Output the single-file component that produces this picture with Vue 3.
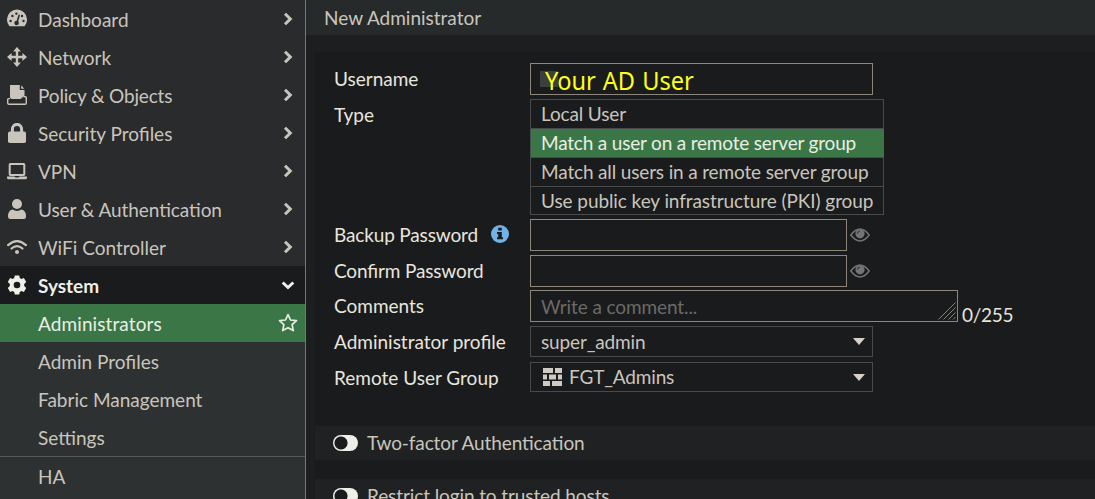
<script setup>
import { ref } from "vue";

const menu = [
  { icon: "dashboard", label: "Dashboard" },
  { icon: "network", label: "Network" },
  { icon: "policy", label: "Policy & Objects" },
  { icon: "lock", label: "Security Profiles" },
  { icon: "laptop", label: "VPN" },
  { icon: "user", label: "User & Authentication" },
  { icon: "wifi", label: "WiFi Controller" },
];
const subMenu = ["Administrators", "Admin Profiles", "Fabric Management", "Settings"];
const activePage = ref("Administrators");

const types = [
  "Local User",
  "Match a user on a remote server group",
  "Match all users in a remote server group",
  "Use public key infrastructure (PKI) group",
];
const selectedType = ref(types[1]);

const backupPassword = ref("");
const confirmPassword = ref("");
const comments = ref("");
const toggles = ["Two-factor Authentication", "Restrict login to trusted hosts"];
</script>

<template>
  <div class="app">
    <nav class="sidebar">
      <div v-for="item in menu" :key="item.label" class="item" :class="item.icon">
        <svg class="icon" viewBox="0 0 20 20">
          <g v-if="item.icon === 'dashboard'">
            <path d="M2.3 17A10 10 0 1 1 17.7 17Q17.4 17.3 17 17.3H3Q2.6 17.3 2.3 17Z" />
            <g class="cut">
              <circle cx="3.6" cy="12" r="1.2" />
              <circle cx="5.4" cy="7" r="1.2" />
              <circle cx="9.4" cy="4.6" r="1.2" />
              <circle cx="15" cy="7" r="1.2" />
              <circle cx="16.5" cy="12" r="1.2" />
              <circle cx="9.6" cy="14" r="2.3" />
              <path d="M11.6 5.5L13 6L10.7 14H9Z" />
            </g>
          </g>
          <path
            v-else-if="item.icon === 'network'"
            d="M10 0L13.9 4.6H11.2V8.8H15.4V6.1L20 10L15.4 13.9V11.2H11.2V15.4H13.9L10 20L6.1 15.4H8.8V11.2H4.6V13.9L0 10L4.6 6.1V8.8H8.8V4.6H6.1Z"
          />
          <g v-else-if="item.icon === 'policy'">
            <path d="M3 0H12.8V5H17.5V11.5H16L14.8 14H6Q3 14 3 12Z" />
            <path d="M14.2 0.2L17.3 3.8H14.2Z" />
            <path
              class="line thin"
              d="M3 13.6H1.5Q0.7 13.6 0.7 14.6V18Q0.7 19.3 2 19.3H18Q19.3 19.3 19.3 18V12.6Q19.3 11.8 18.5 11.8H16.5"
            />
            <path class="gap" d="M2.5 14.8H13Q15 14.8 15.4 12.8" />
          </g>
          <g v-else-if="item.icon === 'lock'">
            <path class="line thick" d="M5.4 10V6A4.6 4.6 0 0 1 14.6 6V10" />
            <rect x="1" y="8.5" width="18" height="11.5" rx="1.8" />
          </g>
          <g v-else-if="item.icon === 'laptop'">
            <rect class="line" x="2.7" y="2.9" width="14.6" height="11" rx="0.6" />
            <path d="M0 15.5H7.5L8.5 16.4H11.5L12.5 15.5H20V16.8Q20 18.3 18.3 18.3H1.7Q0 18.3 0 16.8Z" />
          </g>
          <g v-else-if="item.icon === 'user'">
            <circle cx="10" cy="5" r="5" />
            <path d="M5.5 10.6Q10 13.2 14.5 10.6Q19 11.6 19 17.4Q19 20 16.8 20H3.2Q1 20 1 17.4Q1 11.6 5.5 10.6Z" />
          </g>
          <g v-else>
            <path class="line round" d="M1.1 8.1Q10 0.2 18.9 8.1" />
            <path class="line round" d="M4.5 11.5Q10 6.7 15.5 11.5" />
            <circle cx="10" cy="15.1" r="2" />
          </g>
        </svg>
        <span>{{ item.label }}</span>
        <svg class="arrow" viewBox="0 0 14 14">
          <path class="line arrow-line" d="M4 1.7L9.3 7L4 12.3" />
        </svg>
      </div>

      <div class="item open">
        <svg class="icon" viewBox="0 0 20 20">
          <path
            fill-rule="evenodd"
            d="M7.8 0.4H12.2L12.8 3L14.4 3.9L16.9 3.1L19.2 6.9L17.2 8.9V11.1L19.2 13.1L16.9 16.9L14.4 16.1L12.8 17L12.2 19.6H7.8L7.2 17L5.6 16.1L3.1 16.9L0.8 13.1L2.8 11.1V8.9L0.8 6.9L3.1 3.1L5.6 3.9L7.2 3ZM10 6.7A3.3 3.3 0 1 0 10 13.3A3.3 3.3 0 1 0 10 6.7Z"
          />
        </svg>
        <span>System</span>
        <svg class="arrow" viewBox="0 0 14 14">
          <path class="line arrow-line" d="M1.7 4.5L7 9.5L12.3 4.5" />
        </svg>
      </div>

      <div
        v-for="page in subMenu"
        :key="page"
        class="item sub"
        :class="{ active: page === activePage }"
        @click="activePage = page"
      >
        <span>{{ page }}</span>
        <svg v-if="page === activePage" class="star" viewBox="0 0 20 20">
          <path
            class="line star-line"
            d="M10 1.6L12.5 7L18.5 7.7L14.1 11.7L15.3 17.6L10 14.7L4.7 17.6L5.9 11.7L1.5 7.7L7.5 7Z"
          />
        </svg>
      </div>
      <div class="item sub last"><span>HA</span></div>
    </nav>

    <main>
      <header>New Administrator</header>
      <div class="panel">
        <form @submit.prevent>
          <div class="row">
            <label>Username</label>
            <div class="field username"><span class="smudge"></span><span class="note">Your AD User</span></div>
          </div>
          <div class="row">
            <label>Type</label>
            <div class="types">
              <div
                v-for="type in types"
                :key="type"
                class="type"
                :class="{ selected: type === selectedType }"
                @click="selectedType = type"
              >
                {{ type }}
              </div>
            </div>
          </div>
          <div class="row">
            <label class="narrow">
              Backup Password
              <svg class="info" viewBox="0 0 18 18">
                <circle cx="9" cy="9" r="9" />
                <path d="M7.2 2.8H10.8V5.6H7.2ZM6 7H10.8V12.3H12V14.3H6V12.3H7.2V9H6Z" />
              </svg>
            </label>
            <input v-model="backupPassword" type="password" class="field password" />
            <svg class="eye" viewBox="0 0 20 14">
              <path class="eye-line" d="M0.8 7Q10 -4.8 19.2 7Q10 18.8 0.8 7Z" />
              <circle cx="10" cy="5.8" r="4.6" />
              <path class="glint" d="M7.4 5.6Q7.6 3.4 9.8 3.2" />
            </svg>
          </div>
          <div class="row tight">
            <label class="narrow">Confirm Password</label>
            <input v-model="confirmPassword" type="password" class="field password" />
            <svg class="eye" viewBox="0 0 20 14">
              <path class="eye-line" d="M0.8 7Q10 -4.8 19.2 7Q10 18.8 0.8 7Z" />
              <circle cx="10" cy="5.8" r="4.6" />
              <path class="glint" d="M7.4 5.6Q7.6 3.4 9.8 3.2" />
            </svg>
          </div>
          <div class="row">
            <label>Comments</label>
            <div class="field comments">
              <input v-model="comments" placeholder="Write a comment..." />
              <svg class="grip" viewBox="0 0 18 18">
                <path d="M0.5 17.5L17.5 0.5M5.5 17.5L17.5 5.5M10.5 17.5L17.5 10.5M15 17.5L17.5 15" />
              </svg>
            </div>
            <span class="counter">{{ comments.length }}/255</span>
          </div>
          <div class="row profile">
            <label>Administrator profile</label>
            <div class="select">
              <span>super_admin</span>
              <i class="caret"></i>
            </div>
          </div>
          <div class="row">
            <label>Remote User Group</label>
            <div class="select group">
              <svg class="wall" viewBox="0 0 19 18">
                <path d="M0 0H10V5H0ZM12 0H19V5H12ZM0 6.5H4V11.5H0ZM6 6.5H13V11.5H6ZM15 6.5H19V11.5H15ZM0 13H7V18H0ZM9 13H19V18H9Z" />
              </svg>
              <span>FGT_Admins</span>
              <i class="caret"></i>
            </div>
          </div>
        </form>

        <section v-for="name in toggles" :key="name" class="toggle-row">
          <span class="toggle"></span>
          <span class="toggle-name">{{ name }}</span>
        </section>
      </div>
    </main>
  </div>
</template>

<style>
body {
  margin: 0;
  overflow: hidden;
  background-color: #191b1c;
}
</style>

<style scoped>
.app {
  display: flex;
  width: 100%;
  height: 499px;
  overflow: hidden;
  font-family: Lato, sans-serif;
  font-size: 19px;
  font-feature-settings: "liga" 1;
  color: #c9c5bd;
}
.sidebar {
  box-sizing: border-box;
  width: 306px;
  flex-shrink: 0;
  border-right: 1px solid #7c776b;
  background-color: #292b2c;
}
.item {
  box-sizing: border-box;
  display: flex;
  align-items: center;
  height: 38px;
  padding: 0 10px 0 7px;
}
.item span {
  flex: 1;
}
.policy span {
  letter-spacing: -0.15px;
}
.user span {
  letter-spacing: -0.07px;
}
.icon {
  width: 20px;
  height: 20px;
  margin-right: 11px;
  fill: currentColor;
}
.cut {
  fill: #292b2c;
}
.gap {
  fill: none;
  stroke: #292b2c;
  stroke-width: 1.4;
}
.line {
  fill: none;
  stroke: currentColor;
  stroke-width: 2;
}
.thin {
  stroke-width: 1.4;
}
.thick {
  stroke-width: 3;
}
.round {
  stroke-width: 2.2;
  stroke-linecap: round;
}
.arrow {
  width: 14px;
  height: 14px;
}
.arrow-line {
  stroke-width: 3;
}
.open {
  background-color: #191b1c;
  color: #f0eee9;
  font-weight: bold;
}
.sub {
  padding-left: 38px;
  padding-right: 7px;
  background-color: #2e3132;
}
.active {
  background-color: #3b7746;
  color: #e8eee5;
  letter-spacing: 0.1px;
}
.star {
  width: 20px;
  height: 20px;
}
.star-line {
  stroke-width: 1.7;
  stroke-linejoin: round;
}
.last {
  height: 43px;
  padding-bottom: 3px;
  border-top: 1px solid #55585a;
}
main {
  flex: 1;
  min-width: 0;
  background-color: #1c1e20;
}
header {
  height: 35px;
  line-height: 36px;
  padding-left: 18px;
  background-color: #272a2b;
}
.panel {
  margin: 17px 0 0 8px;
  background-color: #191b1c;
}
form {
  box-sizing: border-box;
  height: 374px;
  padding: 11px 0 0 20px;
}
.row {
  display: flex;
  align-items: flex-start;
  margin-bottom: 4px;
}
.tight {
  margin-bottom: 3px;
}
.profile {
  margin-bottom: 5px;
}
label {
  display: flex;
  align-items: center;
  width: 196px;
  height: 30px;
  color: #e9e5dd;
}
.narrow {
  letter-spacing: -0.15px;
}
.field {
  box-sizing: border-box;
  height: 32px;
  border: 1px solid #8c877a;
  background-color: #191b1c;
  color: #e9e5dd;
}
.username {
  display: flex;
  align-items: center;
  width: 343px;
  padding-left: 9px;
}
.smudge {
  width: 18px;
  height: 16px;
  margin-right: -13px;
  background-color: #3c3e40;
}
.note {
  padding-top: 2px;
  font-family: "Noto Sans", sans-serif;
  font-size: 25px;
  line-height: 30px;
  word-spacing: 1px;
  color: #ffff1a;
  white-space: nowrap;
  transform: scaleX(0.943);
  transform-origin: left;
}
.types {
  box-sizing: border-box;
  width: 354px;
  height: 116px;
  border: 1px solid #484a4b;
  letter-spacing: -0.15px;
}
.type {
  box-sizing: border-box;
  height: 29px;
  line-height: 28px;
  padding-left: 10px;
  border-bottom: 1px solid #484a4b;
  white-space: nowrap;
}
.type:last-child {
  border-bottom: 0;
  letter-spacing: -0.08px;
}
.selected {
  margin-right: -1px;
  background-color: #3b7746;
  color: #e8eee5;
  letter-spacing: -0.19px;
}
.info {
  width: 18px;
  height: 18px;
  margin-left: 13px;
  fill: #71b2e9;
}
.info path {
  fill: #191b1c;
}
.password {
  width: 317px;
  outline: none;
}
.eye {
  width: 20px;
  height: 14px;
  margin: 9px 0 0 3px;
  fill: #747474;
}
.eye-line {
  fill: none;
  stroke: #747474;
  stroke-width: 1.5;
}
.glint {
  fill: none;
  stroke: #2a2b2c;
  stroke-width: 1;
}
.comments {
  display: flex;
  align-items: flex-end;
  width: 428px;
  padding-left: 10px;
}
.comments input {
  flex: 1;
  height: 30px;
  padding: 0;
  box-sizing: border-box;
  border: 0;
  outline: none;
  background: none;
  font: inherit;
  letter-spacing: -0.1px;
  color: inherit;
}
.comments input::placeholder {
  color: #6b6a67;
}
.grip {
  width: 18px;
  height: 18px;
  margin: 0 1px 1px 0;
  fill: none;
  stroke: #85827a;
  stroke-width: 1;
}
.counter {
  margin: 13px 0 0 4px;
  line-height: 24px;
  height: 19px;
  letter-spacing: -0.3px;
  color: #e9e5dd;
}
.select {
  box-sizing: border-box;
  display: flex;
  align-items: center;
  width: 343px;
  height: 31px;
  padding: 0 7px 0 10px;
  border: 1px solid #484a4b;
  letter-spacing: -0.15px;
}
.select span {
  flex: 1;
}
.group {
  height: 30px;
  padding-left: 12px;
}
.group span {
  padding-bottom: 2px;
}
.wall {
  width: 19px;
  height: 18px;
  margin-right: 7px;
  fill: #cfcac2;
}
.caret {
  border: 6px solid transparent;
  border-top: 7px solid #d6d1c8;
  border-bottom: 0;
}
.toggle-row {
  display: flex;
  align-items: center;
  height: 34px;
  margin: 0 0 19px 1px;
  padding-left: 18px;
  background-color: #1f2122;
}
.toggle {
  width: 25px;
  height: 16px;
  margin-right: 9px;
  border-radius: 8px;
  background: radial-gradient(circle at 8px 8px, #191b1c 6px, #f0eee9 7px);
}
.toggle-name {
  padding-bottom: 2px;
  letter-spacing: -0.1px;
}
</style>
